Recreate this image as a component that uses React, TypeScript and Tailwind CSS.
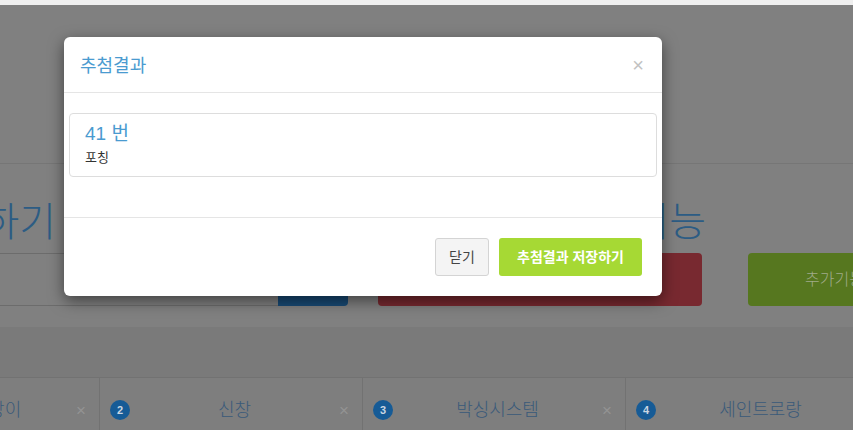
import React from 'react';

const tabs = [
  { no: 1, label: "귀여운호랑이" },
  { no: 2, label: "신창" },
  { no: 3, label: "박싱시스템" },
  { no: 4, label: "세인트로랑" },
];

const App: React.FC = () => {
  return (
    <div className="relative w-[853px] h-[430px] overflow-hidden bg-[#808080] font-['Liberation_Sans','Noto_Sans_CJK_KR',sans-serif]">
      {/* Page behind the dimmed backdrop */}
      <div className="h-[5px] bg-[#efefef]"></div>
      <div className="h-[159px] border-b border-[#767676]"></div>

      <section className="h-[163px] pt-[38px]">
        <div className="flex h-[51px] items-start">
          <div className="w-[56px] shrink-0 overflow-hidden flex justify-end">
            <h2 className="whitespace-nowrap text-[40px] leading-[40px] font-light text-[#2c5c84]">번호 추첨하기</h2>
          </div>
          <div className="ml-auto mr-[147px]">
            <h2 className="whitespace-nowrap text-[40px] leading-[40px] font-light text-[#2c5c84]">추가 기능</h2>
          </div>
        </div>
        <div className="flex h-[53px]">
          <div className="w-[278px] shrink-0 border-y border-[#6c6c6c]"></div>
          <button className="w-[70px] shrink-0 rounded-r-[4px] bg-[#184a75]"></button>
          <button className="ml-[30px] w-[324px] shrink-0 rounded-[4px] bg-[#782930]"></button>
          <button className="ml-[46px] w-[180px] shrink-0 rounded-[4px] bg-[#56771f] text-[16px] font-light text-[#a0ab8a] text-left pl-[57px] whitespace-nowrap">
            추가기능
          </button>
        </div>
      </section>

      <div className="h-[50px] bg-[#7a7a7a]"></div>

      <div className="flex border-t border-[#727272] bg-[#7e7e7e] ml-[-163px]">
        {tabs.map((t) => (
          <div key={t.no} className="w-[263px] shrink-0 h-[64px] border-r border-[#727272] flex items-center pl-[10px] pr-[13px]">
            <span className="w-5 h-5 rounded-full bg-[#165b96] text-[#c9d6e2] text-[11px] font-bold flex items-center justify-center">
              {t.no}
            </span>
            <span className="flex-1 text-center text-[18px] font-light text-[#3a5a7a] whitespace-nowrap">{t.label}</span>
            <span className="text-[17px] text-[#939393] leading-none">×</span>
          </div>
        ))}
      </div>

      {/* Modal */}
      <div className="absolute left-[64px] top-[37px] w-[598px] rounded-[6px] bg-white shadow-[0_5px_15px_rgba(0,0,0,0.5)]">
        <div className="h-[56px] px-[16px] flex items-center justify-between border-b border-[#e5e5e5]">
          <h4 className="text-[18px] text-[#4a9bd0] font-['Noto_Sans_CJK_KR',sans-serif]">추첨결과</h4>
          <button className="text-[20px] leading-none text-[#c2c2c2] pr-[2px]">×</button>
        </div>
        <div className="pt-[20px] pb-[40px] px-[5px]">
          <div className="border border-[#dddddd] rounded-[4px] px-[15px] pt-[9px] pb-[8px]">
            <div className="text-[19px] leading-[22px] text-[#4a9bd0]">41 번</div>
            <div className="mt-[3px] text-[13px] leading-[20px] text-[#333333]">포칭</div>
          </div>
        </div>
        <div className="border-t border-[#e5e5e5] px-[20px] py-[20px] flex justify-end gap-[10px]">
          <button className="h-[38px] w-[54px] rounded-[3px] border border-[#d4d4d4] bg-[#f4f4f4] text-[14px] text-[#444444]">
            닫기
          </button>
          <button className="h-[38px] w-[143px] rounded-[3px] bg-[#a6d934] text-[14px] font-bold text-white whitespace-nowrap">
            추첨결과 저장하기
          </button>
        </div>
      </div>
    </div>
  );
};

export default App;
